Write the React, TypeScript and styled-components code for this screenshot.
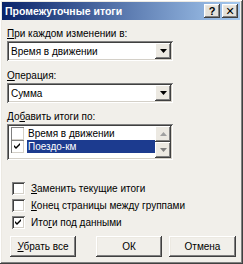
import React from "react";
import styled, { createGlobalStyle } from "styled-components";

const GlobalStyle = createGlobalStyle`
  html, body {
    margin: 0;
    padding: 0;
    background: #f1efea;
  }
  * {
    box-sizing: border-box;
  }
`;

const raised = `
  box-shadow: inset -1px -1px #404040, inset 1px 1px #ffffff,
    inset -2px -2px #808080, inset 2px 2px #ece9e2;
`;

const sunken = `
  box-shadow: inset 1px 1px #808080, inset -1px -1px #ffffff,
    inset 2px 2px #404040, inset -2px -2px #d4d0c8;
`;

const Window = styled.div`
  width: 243px;
  height: 264px;
  background: #f1efea;
  padding: 2px 3px 3px 2px;
  display: flex;
  flex-direction: column;
  font-family: "Liberation Sans", "DejaVu Sans", sans-serif;
  font-size: 10px;
  color: #000;
  ${raised}
`;

const TitleBar = styled.div`
  height: 18px;
  display: flex;
  align-items: center;
  padding: 0 2px 0 3px;
  background: linear-gradient(to right, #0a246a, #a6caf0);
`;

const Title = styled.span`
  flex: 1;
  color: #fff;
  font-weight: bold;
  font-size: 10.5px;
  white-space: nowrap;
`;

const TitleButton = styled.div<{ $gap?: number }>`
  width: 16px;
  height: 14px;
  margin-left: ${(p) => p.$gap ?? 0}px;
  background: #e4e1da;
  display: flex;
  align-items: center;
  justify-content: center;
  font-weight: bold;
  font-size: 11px;
  line-height: 1;
  ${raised}
`;

const Body = styled.div`
  flex: 1;
  display: flex;
  flex-direction: column;
  padding: 7px 0 0 5px;
`;

const Label = styled.div<{ $top?: number }>`
  height: 13px;
  line-height: 13px;
  margin-top: ${(p) => p.$top ?? 0}px;
  white-space: nowrap;
`;

const Combo = styled.div`
  width: 166px;
  height: 20px;
  margin-top: 1px;
  background: #fff;
  display: flex;
  align-items: center;
  padding: 2px 2px 2px 4px;
  ${sunken}
`;

const ComboText = styled.span`
  flex: 1;
`;

const DropButton = styled.div`
  width: 16px;
  height: 16px;
  background: #ece9e2;
  display: flex;
  align-items: center;
  justify-content: center;
  ${raised}
`;

const ListBox = styled.div`
  width: 166px;
  height: 36px;
  margin-top: 1px;
  background: #fff;
  display: flex;
  padding: 2px;
  ${sunken}
`;

const ListItems = styled.div`
  flex: 1;
  display: flex;
  flex-direction: column;
  padding-top: 1px;
`;

const ListRow = styled.div`
  height: 13px;
  display: flex;
  align-items: center;
  padding-left: 2px;
`;

const ItemText = styled.span<{ $selected?: boolean }>`
  flex: 1;
  height: 13px;
  line-height: 13px;
  margin-left: 3px;
  padding-left: 1px;
  background: ${(p) => (p.$selected ? "#1c3b8f" : "transparent")};
  color: ${(p) => (p.$selected ? "#fff" : "#000")};
`;

const ScrollBar = styled.div`
  width: 16px;
  display: flex;
  flex-direction: column;
  justify-content: space-between;
  background: #f4f3ee;
`;

const ScrollButton = styled.div`
  height: 16px;
  background: #ece9e2;
  display: flex;
  align-items: center;
  justify-content: center;
  ${raised}
`;

const Box = styled.div<{ $flat?: boolean }>`
  width: 13px;
  height: 13px;
  flex: none;
  background: #fff;
  display: flex;
  align-items: center;
  justify-content: center;
  ${(p) =>
    p.$flat
      ? "box-shadow: inset 1px 1px #808080, inset -1px -1px #d4d0c8;"
      : sunken}
`;

const Options = styled.div`
  display: flex;
  flex-direction: column;
  gap: 4px;
  margin-top: 22px;
  padding-left: 5px;
`;

const OptionRow = styled.div`
  height: 13px;
  display: flex;
  align-items: center;
  gap: 6px;
  white-space: nowrap;
`;

const Buttons = styled.div`
  display: flex;
  margin-top: 7px;
  padding-left: 3px;
`;

const PushButton = styled.div<{ $gap?: number; $width: number }>`
  width: ${(p) => p.$width}px;
  height: 21px;
  margin-left: ${(p) => p.$gap ?? 0}px;
  background: #f1efea;
  display: flex;
  align-items: center;
  justify-content: center;
  ${raised}
`;

const Check = () => (
  <svg width="7" height="7" viewBox="0 0 7 7">
    <path d="M0 2 L2 4 L6 0 V2 L2 6 L0 4 Z" fill="#000" />
  </svg>
);

const Arrow = ({ up, color }: { up?: boolean; color: string }) => (
  <svg width="7" height="4" viewBox="0 0 7 4">
    <path d={up ? "M3.5 0 L7 4 H0 Z" : "M0 0 H7 L3.5 4 Z"} fill={color} />
  </svg>
);

const App = () => {
  return (
    <>
      <GlobalStyle />
      <Window>
        <TitleBar>
          <Title>Промежуточные итоги</Title>
          <TitleButton>?</TitleButton>
          <TitleButton $gap={2}>✕</TitleButton>
        </TitleBar>
        <Body>
          <Label>
            <u>П</u>ри каждом изменении в:
          </Label>
          <Combo>
            <ComboText>Время в движении</ComboText>
            <DropButton>
              <Arrow color="#000" />
            </DropButton>
          </Combo>

          <Label $top={8}>
            <u>О</u>перация:
          </Label>
          <Combo>
            <ComboText>Сумма</ComboText>
            <DropButton>
              <Arrow color="#000" />
            </DropButton>
          </Combo>

          <Label $top={7}>
            До<u>б</u>авить итоги по:
          </Label>
          <ListBox>
            <ListItems>
              <ListRow>
                <Box $flat />
                <ItemText>Время в движении</ItemText>
              </ListRow>
              <ListRow>
                <Box $flat>
                  <Check />
                </Box>
                <ItemText $selected>Поездо-км</ItemText>
              </ListRow>
            </ListItems>
            <ScrollBar>
              <ScrollButton>
                <Arrow up color="#a0a0a0" />
              </ScrollButton>
              <ScrollButton>
                <Arrow color="#808080" />
              </ScrollButton>
            </ScrollBar>
          </ListBox>

          <Options>
            <OptionRow>
              <Box />
              <span>
                <u>З</u>аменить текущие итоги
              </span>
            </OptionRow>
            <OptionRow>
              <Box />
              <span>
                <u>К</u>онец страницы между группами
              </span>
            </OptionRow>
            <OptionRow>
              <Box>
                <Check />
              </Box>
              <span>
                Ито<u>г</u>и под данными
              </span>
            </OptionRow>
          </Options>

          <Buttons>
            <PushButton $width={66}>
              <span>
                <u>У</u>брать все
              </span>
            </PushButton>
            <PushButton $width={66} $gap={20}>
              ОК
            </PushButton>
            <PushButton $width={67} $gap={7}>
              Отмена
            </PushButton>
          </Buttons>
        </Body>
      </Window>
    </>
  );
};

export default App;
